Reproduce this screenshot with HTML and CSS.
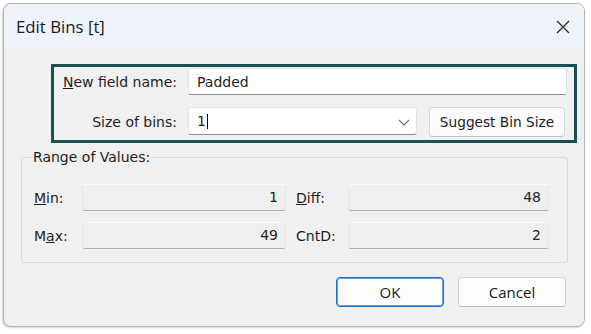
FILE: index.html
```html
<!DOCTYPE html>
<html>
<head>
<meta charset="utf-8">
<link rel="stylesheet" href="styles.css">
</head>
<body>
<div class="window">
  <div class="titlebar">
    <span class="title">Edit Bins [t]</span>
    <span class="close">
      <svg width="14" height="14" viewBox="0 0 14 14"><path d="M1 1 L13 13 M13 1 L1 13" stroke="#2b2b2b" stroke-width="1.3" fill="none"/></svg>
    </span>
  </div>
  <div class="content">
    <div class="highlight">
      <label class="lbl"><u>N</u>ew field name:</label>
      <div class="input wide">Padded</div>
      <label class="lbl">Size of bins:</label>
      <div class="row2">
        <div class="input combo"><span>1</span><span class="caret"></span>
          <svg class="chev" width="12" height="7" viewBox="0 0 12 7"><path d="M1 1 L6 6 L11 1" stroke="#707070" stroke-width="1.1" fill="none"/></svg>
        </div>
        <button class="btn suggest">Suggest Bin Size</button>
      </div>
    </div>
    <fieldset class="range">
      <legend>Range of Values:</legend>
      <div class="grid">
        <span class="glbl"><u>M</u>in:</span>
        <div class="ro">1</div>
        <span class="glbl second"><u>D</u>iff:</span>
        <div class="ro">48</div>
        <span class="glbl">M<u>a</u>x:</span>
        <div class="ro">49</div>
        <span class="glbl second">CntD:</span>
        <div class="ro">2</div>
      </div>
    </fieldset>
    <div class="actions">
      <button class="dbtn ok">OK</button>
      <button class="dbtn">Cancel</button>
    </div>
  </div>
</div>
</body>
</html>
```

FILE: styles.css
```css
html, body {
  margin: 0;
  padding: 0;
  background: #ffffff;
}
body {
  width: 591px;
  height: 334px;
  overflow: hidden;
}
.window {
  box-sizing: border-box;
  margin: 3px 0 0 3px;
  width: 582px;
  height: 324px;
  border: 1px solid #b4b4b4;
  border-radius: 8px;
  background: #f0f0f0;
  box-shadow: -1px 1px 2px rgba(0,0,0,0.18);
  overflow: hidden;
  display: flex;
  flex-direction: column;
}
.titlebar {
  height: 44px;
  flex: none;
  background: #eef2f9;
  display: flex;
  align-items: center;
  justify-content: space-between;
  padding: 0 14px 0 12px;
}
.title {
  font-family: "Open Sans", "Noto Sans", sans-serif;
  font-size: 16.8px;
  color: #1a1a1a;
}
.close {
  display: flex;
  width: 14px;
  height: 14px;
  margin-top: 2px;
}
.content {
  flex: 1;
  display: flex;
  flex-direction: column;
  font-family: "DejaVu Sans", sans-serif;
  font-size: 14px;
  color: #1e1e1e;
}
.highlight {
  box-sizing: border-box;
  margin: 16px 0 0 47px;
  width: 526px;
  height: 79px;
  border: 3px solid #1b4f52;
  display: grid;
  grid-template-columns: 123px 379px;
  grid-template-rows: 27px 30px;
  column-gap: 11px;
  row-gap: 12px;
  padding-top: 1px;
  align-items: center;
}
.lbl {
  text-align: right;
}
.input {
  box-sizing: border-box;
  height: 27px;
  background: #ffffff;
  border: 1px solid #e4e4e4;
  border-bottom: 1px solid #8a8a8a;
  border-radius: 3px;
  padding-left: 8px;
  display: flex;
  align-items: center;
}
.row2 {
  display: flex;
  align-items: flex-start;
  gap: 12px;
  height: 30px;
}
.combo {
  width: 229px;
  height: 28px;
  position: relative;
}
.caret {
  display: inline-block;
  width: 1px;
  height: 15px;
  background: #000;
  margin-left: 1px;
}
.chev {
  position: absolute;
  right: 6px;
  top: 11px;
}
.btn {
  box-sizing: border-box;
  width: 136px;
  height: 30px;
  font-family: "DejaVu Sans", sans-serif;
  font-size: 13.7px;
  color: #1e1e1e;
  background: #fbfbfb;
  border: 1px solid #d8d8d8;
  border-bottom-color: #c4c4c4;
  border-radius: 4px;
  padding: 0;
}
.range {
  box-sizing: border-box;
  margin: 6px 0 0 17px;
  width: 547px;
  border: 1px solid #dadada;
  border-radius: 2px;
  padding: 0 0 13px 12px;
}
.range legend {
  margin-left: -2px;
  padding: 0 1px;
  line-height: 16px;
}
.grid {
  margin-top: 19px;
  display: grid;
  grid-template-columns: 48px 204px 62px 201px;
  grid-template-rows: 27px 27px;
  column-gap: 0;
  row-gap: 11px;
  align-items: center;
}
.grid .second {
  margin-left: 10px;
}
.ro {
  box-sizing: border-box;
  height: 27px;
  background: #efefef;
  border: 1px solid #e6e6e6;
  border-top-color: #fafafa;
  border-bottom: 1px solid #b0b0b0;
  border-radius: 3px;
  text-align: right;
  padding-right: 7px;
  line-height: 25px;
}
.actions {
  display: flex;
  justify-content: flex-end;
  gap: 14px;
  padding-right: 18px;
  margin-top: 14px;
}
.dbtn {
  box-sizing: border-box;
  width: 108px;
  height: 30px;
  font-family: "Open Sans", "Noto Sans", sans-serif;
  font-size: 15px;
  color: #1a1a1a;
  background: #fdfdfd;
  border: 1px solid #d3d3d3;
  border-bottom-color: #bcbcbc;
  border-radius: 4px;
  padding: 0;
}
.ok {
  border: 1px solid #1e6fbf;
  box-shadow: inset 0 0 0 1px #6aa3d8;
}
```
